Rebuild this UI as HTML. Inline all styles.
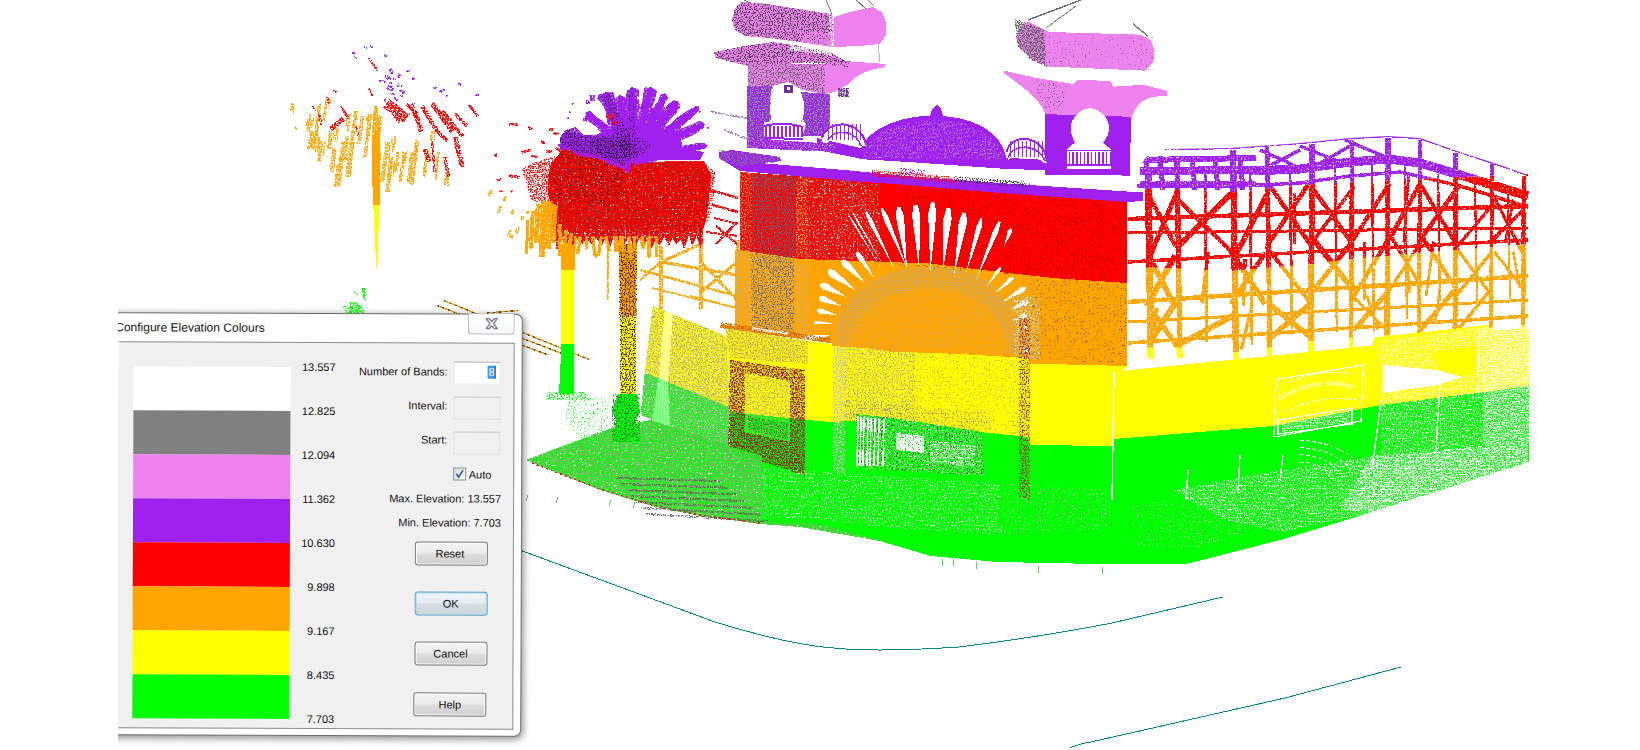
<!DOCTYPE html>
<html><head><meta charset="utf-8"><title>Configure Elevation Colours</title>
<style>
html,body{margin:0;padding:0;background:#fff;overflow:hidden}
body{width:1640px;height:750px;position:relative;font-family:"Liberation Sans",sans-serif;color:#000}
#scene{position:absolute;left:0;top:0}
#clip{position:absolute;left:118px;top:290px;width:440px;height:460px;overflow:hidden}
#dlg{position:absolute;left:-18px;top:22.8px;width:420px;height:421.4px;background:#fff;border:1px solid #6e6e6e;border-radius:7px;
 box-shadow:1px 2px 7px 1px rgba(0,0,0,.42);transform:rotate(0.22deg);transform-origin:220px 210px}
#ttl{position:absolute;left:13.5px;top:5.8px;font-size:12px;line-height:16px;white-space:nowrap;color:#111}
#cls{position:absolute;left:366px;top:-1px;width:45px;height:20px;border:1px solid #a9a9a9;border-top:none;border-radius:0 0 4px 4px;
 background:linear-gradient(#fff,#f4f6f8)}
#cls svg{position:absolute;left:15px;top:3px}
#cli{position:absolute;left:17px;top:28.4px;width:396px;height:386.8px;background:#f0f0f0;border:1px solid #8d8d8d;border-left-color:#f0f0f0;box-sizing:border-box}
.band{position:absolute;left:13.75px;width:157px;height:44px}
.lv{position:absolute;left:160px;width:56px;text-align:right;font-size:11px;line-height:13px;color:#111}
.lb{position:absolute;width:200px;text-align:right;font-size:11px;line-height:13px;color:#111;white-space:nowrap}
.in{position:absolute;left:334.4px;width:45px;height:21px;border:1px solid #e3e9ef;border-top-color:#abadb3;box-sizing:content-box}
.btn{position:absolute;width:71px;height:22px;border:1px solid #7a7a7a;border-radius:3px;font-size:11px;line-height:22px;text-align:center;color:#111;
 background:linear-gradient(#f2f2f2 0%,#ebebeb 48%,#dddddd 52%,#cfcfcf 100%);box-shadow:0 0 0 1px #fff inset}
</style></head>
<body>
<svg id="scene" width="1640" height="750" viewBox="0 0 1640 750" shape-rendering="crispEdges">
<defs>
<filter id="d91" x="0" y="0" width="1640" height="750" filterUnits="userSpaceOnUse" color-interpolation-filters="sRGB"><feTurbulence type="fractalNoise" baseFrequency="0.75" numOctaves="1" seed="3" result="t"/><feColorMatrix in="t" type="matrix" values="0 0 0 0 1 0 0 0 0 1 0 0 0 0 1 10 0 0 0 -3" result="m"/><feComposite in="SourceGraphic" in2="m" operator="in"/></filter>
<filter id="d81" x="0" y="0" width="1640" height="750" filterUnits="userSpaceOnUse" color-interpolation-filters="sRGB"><feTurbulence type="fractalNoise" baseFrequency="0.75" numOctaves="1" seed="4" result="t"/><feColorMatrix in="t" type="matrix" values="0 0 0 0 1 0 0 0 0 1 0 0 0 0 1 10 0 0 0 -3.5" result="m"/><feComposite in="SourceGraphic" in2="m" operator="in"/></filter>
<filter id="d68" x="0" y="0" width="1640" height="750" filterUnits="userSpaceOnUse" color-interpolation-filters="sRGB"><feTurbulence type="fractalNoise" baseFrequency="0.75" numOctaves="1" seed="5" result="t"/><feColorMatrix in="t" type="matrix" values="0 0 0 0 1 0 0 0 0 1 0 0 0 0 1 10 0 0 0 -4" result="m"/><feComposite in="SourceGraphic" in2="m" operator="in"/></filter>
<filter id="d60" x="0" y="0" width="1640" height="750" filterUnits="userSpaceOnUse" color-interpolation-filters="sRGB"><feTurbulence type="fractalNoise" baseFrequency="0.75" numOctaves="1" seed="6" result="t"/><feColorMatrix in="t" type="matrix" values="0 0 0 0 1 0 0 0 0 1 0 0 0 0 1 10 0 0 0 -4.25" result="m"/><feComposite in="SourceGraphic" in2="m" operator="in"/></filter>
<filter id="d50" x="0" y="0" width="1640" height="750" filterUnits="userSpaceOnUse" color-interpolation-filters="sRGB"><feTurbulence type="fractalNoise" baseFrequency="0.75" numOctaves="1" seed="7" result="t"/><feColorMatrix in="t" type="matrix" values="0 0 0 0 1 0 0 0 0 1 0 0 0 0 1 10 0 0 0 -4.5" result="m"/><feComposite in="SourceGraphic" in2="m" operator="in"/></filter>
<filter id="d40" x="0" y="0" width="1640" height="750" filterUnits="userSpaceOnUse" color-interpolation-filters="sRGB"><feTurbulence type="fractalNoise" baseFrequency="0.75" numOctaves="1" seed="8" result="t"/><feColorMatrix in="t" type="matrix" values="0 0 0 0 1 0 0 0 0 1 0 0 0 0 1 10 0 0 0 -4.75" result="m"/><feComposite in="SourceGraphic" in2="m" operator="in"/></filter>
<filter id="d31" x="0" y="0" width="1640" height="750" filterUnits="userSpaceOnUse" color-interpolation-filters="sRGB"><feTurbulence type="fractalNoise" baseFrequency="0.75" numOctaves="1" seed="9" result="t"/><feColorMatrix in="t" type="matrix" values="0 0 0 0 1 0 0 0 0 1 0 0 0 0 1 10 0 0 0 -5" result="m"/><feComposite in="SourceGraphic" in2="m" operator="in"/></filter>
<filter id="d25" x="0" y="0" width="1640" height="750" filterUnits="userSpaceOnUse" color-interpolation-filters="sRGB"><feTurbulence type="fractalNoise" baseFrequency="0.75" numOctaves="1" seed="10" result="t"/><feColorMatrix in="t" type="matrix" values="0 0 0 0 1 0 0 0 0 1 0 0 0 0 1 10 0 0 0 -5.25" result="m"/><feComposite in="SourceGraphic" in2="m" operator="in"/></filter>
<filter id="d19" x="0" y="0" width="1640" height="750" filterUnits="userSpaceOnUse" color-interpolation-filters="sRGB"><feTurbulence type="fractalNoise" baseFrequency="0.75" numOctaves="1" seed="11" result="t"/><feColorMatrix in="t" type="matrix" values="0 0 0 0 1 0 0 0 0 1 0 0 0 0 1 10 0 0 0 -5.5" result="m"/><feComposite in="SourceGraphic" in2="m" operator="in"/></filter>
<filter id="d14" x="0" y="0" width="1640" height="750" filterUnits="userSpaceOnUse" color-interpolation-filters="sRGB"><feTurbulence type="fractalNoise" baseFrequency="0.75" numOctaves="1" seed="12" result="t"/><feColorMatrix in="t" type="matrix" values="0 0 0 0 1 0 0 0 0 1 0 0 0 0 1 10 0 0 0 -5.75" result="m"/><feComposite in="SourceGraphic" in2="m" operator="in"/></filter>
<filter id="d9" x="0" y="0" width="1640" height="750" filterUnits="userSpaceOnUse" color-interpolation-filters="sRGB"><feTurbulence type="fractalNoise" baseFrequency="0.75" numOctaves="1" seed="13" result="t"/><feColorMatrix in="t" type="matrix" values="0 0 0 0 1 0 0 0 0 1 0 0 0 0 1 10 0 0 0 -6" result="m"/><feComposite in="SourceGraphic" in2="m" operator="in"/></filter>
<filter id="d5" x="0" y="0" width="1640" height="750" filterUnits="userSpaceOnUse" color-interpolation-filters="sRGB"><feTurbulence type="fractalNoise" baseFrequency="0.75" numOctaves="1" seed="14" result="t"/><feColorMatrix in="t" type="matrix" values="0 0 0 0 1 0 0 0 0 1 0 0 0 0 1 10 0 0 0 -6.3" result="m"/><feComposite in="SourceGraphic" in2="m" operator="in"/></filter>
<filter id="d3" x="0" y="0" width="1640" height="750" filterUnits="userSpaceOnUse" color-interpolation-filters="sRGB"><feTurbulence type="fractalNoise" baseFrequency="0.75" numOctaves="1" seed="15" result="t"/><feColorMatrix in="t" type="matrix" values="0 0 0 0 1 0 0 0 0 1 0 0 0 0 1 10 0 0 0 -6.5" result="m"/><feComposite in="SourceGraphic" in2="m" operator="in"/></filter>
</defs>
<path d="M517,549 L715,622 Q790,645 834,648 Q875,652.5 959,647 Q1040,637 1112,623 L1223,597" fill="none" stroke="#008b8b" stroke-width="1"/>
<path d="M1070,748 Q1078,744 1091,742 L1285,698 L1401,667" fill="none" stroke="#008b8b" stroke-width="1"/>
<defs>
<clipPath id="cpP"><polygon points="1137,170 1150,152 1165,149 1230,148 1300,143 1350,138 1388,136 1420,138 1460,152 1500,165 1528,175 1529,174 1529,174 1315,184 1238,192 1150,189 1120,191 1120,168"/></clipPath>
<clipPath id="cpR"><polygon points="1120,191 1150,189 1238,192 1315,184 1529,174 1529,244 1352,259 1312,264 1232,271 1150,267.5 1120,271"/></clipPath>
<clipPath id="cpO"><polygon points="1120,271 1150,267.5 1232,271 1312,264 1352,259 1529,244 1529,325 1352,338 1294,342.6 1257,350.6 1219,354 1177,347.5 1120,348"/></clipPath>
<clipPath id="cpY"><polygon points="1120,348 1177,347.5 1219,354 1257,350.6 1294,342.6 1352,338 1529,325 1529,331 1372,350 1120,374"/></clipPath>
<g id="lat" fill="none"><line x1="1148" y1="166.769" x2="1151" y2="358.754" stroke-width="6.88975"/><line x1="1177" y1="160.815" x2="1180" y2="358.5" stroke-width="5.27381"/><line x1="1233" y1="149.786" x2="1236" y2="361.613" stroke-width="6.36913"/><line x1="1267" y1="147.357" x2="1270" y2="358.186" stroke-width="4.84069"/><line x1="1312" y1="143.8" x2="1311" y2="352.172" stroke-width="5.88525"/><line x1="1352" y1="139.895" x2="1351" y2="349" stroke-width="4.43162"/><line x1="1388" y1="138" x2="1387" y2="337.965" stroke-width="5.41975"/><line x1="1420" y1="140" x2="1419" y2="334.456" stroke-width="4.10438"/><line x1="1456" y1="152.6" x2="1455" y2="330.509" stroke-width="5.00325"/><line x1="1492" y1="164.4" x2="1491" y2="331.949" stroke-width="3.75788"/><line x1="1524" y1="175.571" x2="1523" y2="331.128" stroke-width="4.58675"/><line x1="1205" y1="173.385" x2="1207" y2="341.752" stroke-width="2.99"/><line x1="1250" y1="171.571" x2="1252" y2="345.131" stroke-width="2.864"/><line x1="1290" y1="168.714" x2="1292" y2="328.583" stroke-width="2.752"/><line x1="1335" y1="164.5" x2="1337" y2="331.699" stroke-width="2.626"/><line x1="1372" y1="161.842" x2="1374" y2="331.536" stroke-width="2.5224"/><line x1="1405" y1="162.062" x2="1407" y2="319.06" stroke-width="2.43"/><line x1="1438" y1="169.3" x2="1440" y2="301.145" stroke-width="2.3376"/><line x1="1475" y1="181.875" x2="1477" y2="301.953" stroke-width="2.234"/><line x1="1508" y1="192.857" x2="1510" y2="300.587" stroke-width="2.1416"/><polyline fill="none" stroke-width="2.5" points="1165,149 1230,148 1300,143 1350,138 1388,136 1420,138 1460,152 1500,165 1528,175"/><polyline fill="none" stroke-width="9" points="1250,171 1300,169 1350,162 1388,159 1420,163 1460,175 1528,196"/><line x1="1140" y1="160" x2="1256" y2="158" stroke-width="6"/><line x1="1140" y1="171" x2="1256" y2="170" stroke-width="8"/><line x1="1140" y1="184" x2="1256" y2="184" stroke-width="6"/><line x1="1146" y1="156" x2="1149" y2="190" stroke-width="5"/><line x1="1160" y1="156" x2="1163" y2="190" stroke-width="5"/><line x1="1192" y1="156" x2="1195" y2="190" stroke-width="5"/><line x1="1215" y1="156" x2="1218" y2="190" stroke-width="5"/><line x1="1240" y1="156" x2="1243" y2="190" stroke-width="5"/><polyline fill="none" stroke-width="3.5" points="1137,186 1240,186 1300,183 1350,176 1400,172 1460,186 1528,207"/><line x1="1260" y1="150" x2="1300" y2="168" stroke-width="3.5"/><line x1="1300" y1="146" x2="1345" y2="164" stroke-width="3.5"/><line x1="1345" y1="140" x2="1388" y2="158" stroke-width="3.5"/><line x1="1262" y1="170" x2="1300" y2="150" stroke-width="3.5"/><line x1="1312" y1="168" x2="1350" y2="146" stroke-width="3.5"/><line x1="1128" y1="219" x2="1528" y2="206" stroke-width="4.5"/><line x1="1128" y1="233" x2="1528" y2="228" stroke-width="3"/><line x1="1128" y1="262" x2="1528" y2="240" stroke-width="3.5"/><line x1="1128" y1="302" x2="1528" y2="276" stroke-width="4.5"/><line x1="1128" y1="322" x2="1528" y2="300" stroke-width="3"/><line x1="1128" y1="343" x2="1528" y2="316" stroke-width="3.5"/><line x1="1148.18" y1="193.886" x2="1175.43" y2="245.846" stroke-width="4.58828"/><line x1="1149.58" y1="257.241" x2="1178.44" y2="188.187" stroke-width="4.80811"/><line x1="1149.7" y1="258.122" x2="1175.02" y2="306.633" stroke-width="5.64151"/><line x1="1146.45" y1="306.44" x2="1175.03" y2="255.786" stroke-width="6.08782"/><line x1="1149.96" y1="307.626" x2="1178.84" y2="348.677" stroke-width="5.26534"/><line x1="1148.47" y1="343.927" x2="1175.37" y2="303.024" stroke-width="5.966"/><line x1="1157.06" y1="308.274" x2="1151.79" y2="345.17" stroke-width="3.58267"/><line x1="1176.25" y1="197.833" x2="1231.54" y2="251.759" stroke-width="4.44367"/><line x1="1175.93" y1="248.841" x2="1234.19" y2="190.065" stroke-width="5.24213"/><line x1="1208.18" y1="251.957" x2="1201.88" y2="303.336" stroke-width="3.49031"/><line x1="1174.81" y1="346.868" x2="1234.9" y2="314.812" stroke-width="5.63782"/><line x1="1235.24" y1="256.109" x2="1266.57" y2="194.695" stroke-width="5.10621"/><line x1="1231.52" y1="252.135" x2="1265.25" y2="304.001" stroke-width="5.83288"/><line x1="1230.65" y1="303.893" x2="1265.41" y2="252.804" stroke-width="4.55736"/><line x1="1245.17" y1="258.587" x2="1243.34" y2="305.85" stroke-width="3.31194"/><line x1="1252.12" y1="305.151" x2="1241.1" y2="349.635" stroke-width="3.31194"/><line x1="1269.39" y1="184.842" x2="1312.14" y2="247.199" stroke-width="4.50431"/><line x1="1266.89" y1="246.301" x2="1311.57" y2="179.444" stroke-width="4.52882"/><line x1="1294.17" y1="193.347" x2="1294.14" y2="243.779" stroke-width="3.20366"/><line x1="1265.76" y1="245.896" x2="1310.71" y2="303.334" stroke-width="3.95315"/><line x1="1269.35" y1="304.257" x2="1313.92" y2="340.02" stroke-width="5.29009"/><line x1="1266.97" y1="340.553" x2="1310.61" y2="303.384" stroke-width="5.51437"/><line x1="1312.75" y1="188.596" x2="1352.68" y2="244.167" stroke-width="4.53633"/><line x1="1312.89" y1="241.133" x2="1354.03" y2="186.733" stroke-width="3.64385"/><line x1="1312.81" y1="238.448" x2="1353.92" y2="291.111" stroke-width="5.40297"/><line x1="1309.89" y1="294.905" x2="1352.65" y2="241.22" stroke-width="4.96614"/><line x1="1350.16" y1="244.108" x2="1389.36" y2="183.733" stroke-width="4.39007"/><line x1="1351.19" y1="300.28" x2="1389.31" y2="237.763" stroke-width="4.34444"/><line x1="1364.41" y1="241.523" x2="1364.14" y2="299.956" stroke-width="2.93293"/><line x1="1350.27" y1="293.93" x2="1389.28" y2="332.632" stroke-width="3.37181"/><line x1="1353.57" y1="330.022" x2="1388.21" y2="291.659" stroke-width="4.8365"/><line x1="1366.8" y1="295.419" x2="1378" y2="330.141" stroke-width="2.93293"/><line x1="1389.85" y1="238.255" x2="1419.68" y2="184.535" stroke-width="4.62786"/><line x1="1408.58" y1="175.549" x2="1403.83" y2="242.142" stroke-width="2.81827"/><line x1="1389.43" y1="234.114" x2="1421.8" y2="287.721" stroke-width="3.49139"/><line x1="1387.23" y1="293.587" x2="1421.94" y2="240.369" stroke-width="3.23096"/><line x1="1404.54" y1="237.943" x2="1409.71" y2="292.896" stroke-width="2.81827"/><line x1="1421.28" y1="186.071" x2="1456.61" y2="244.637" stroke-width="4.16879"/><line x1="1421.98" y1="237.447" x2="1457.97" y2="187.155" stroke-width="4.6193"/><line x1="1419.72" y1="233.531" x2="1457.3" y2="290.355" stroke-width="4.26055"/><line x1="1433.73" y1="241.551" x2="1425.99" y2="296.427" stroke-width="2.71635"/><line x1="1419.28" y1="331.456" x2="1454.05" y2="290.84" stroke-width="4.7392"/><line x1="1439.85" y1="289.525" x2="1435.06" y2="324.284" stroke-width="2.71635"/><line x1="1457.58" y1="246.129" x2="1493.47" y2="203.55" stroke-width="3.2384"/><line x1="1456.35" y1="247.771" x2="1493.25" y2="297.876" stroke-width="3.16875"/><line x1="1456.84" y1="294.952" x2="1492.57" y2="250.78" stroke-width="3.47991"/><line x1="1457.9" y1="329.805" x2="1491.09" y2="289.018" stroke-width="3.51963"/><line x1="1493.92" y1="196.912" x2="1523.52" y2="254.755" stroke-width="3.29601"/><line x1="1489.66" y1="243.012" x2="1524.19" y2="208.626" stroke-width="3.8252"/><line x1="1513.41" y1="199.589" x2="1505.16" y2="241.618" stroke-width="2.48703"/><line x1="1494.34" y1="251.845" x2="1524.5" y2="290.355" stroke-width="2.98835"/><line x1="1513.14" y1="251.516" x2="1519.81" y2="288.039" stroke-width="2.48703"/></g>
</defs>
<g clip-path="url(#cpP)" stroke="#a020f0" color="#a020f0"><use href="#lat"/></g>
<g clip-path="url(#cpR)" stroke="#ff0000" color="#ff0000"><use href="#lat"/></g>
<g clip-path="url(#cpO)" stroke="#ffa500" color="#ffa500"><use href="#lat"/></g>
<g clip-path="url(#cpY)" stroke="#ffff00" color="#ffff00"><use href="#lat"/></g>
<polygon points="1127,150 1529,130 1529,330 1127,372" fill="#ffffff" filter="url(#d9)"/>
<polygon points="740,172 900,184 1127,202 1127,283 1053,278 1000,272 930,263.5 860,261 800,259 740,250" fill="#ff0000" />
<polygon points="735,250 740,250 800,259 860,261 930,263.5 1000,272 1053,278 1127,283 1127,366 1030,363.6 1028,357 1020,356 891,351.6 830,343 720,328 722,324 735,326" fill="#ffa500" />
<polygon points="808,341 891,351.6 1020,356 1028,357 1030,363.6 1127,366 1122,371 1127,370.3 1372,345.6 1374,337.5 1488,325 1490,330 1529,329 1529,386 1481,392.4 1381,405 1273,426 1114,439 1112,446 1030,445 1028,437 990,433 859,421.6 804,420" fill="#ffff00" />
<polygon points="804,420 859,421.6 990,433 1028,437 1030,445 1112,446 1114,439 1273,426 1381,405 1481,392.4 1529,386 1529,462 1359,516 1280,540 1188,563.6 1100,564 997,562 931,556 880,541 813,524 760,524 760,440" fill="#00ff00" />
<polygon points="740,172 752,173 752,252 740,250" fill="#b0a070" filter="url(#d25)"/>
<polygon points="752,173 796,177 796,257 752,252" fill="#5a6a88" filter="url(#d31)"/>
<polygon points="796,177 808,178 808,259 796,257" fill="#c8b060" filter="url(#d31)"/>
<polygon points="808,178 880,184 880,262 808,259" fill="#ffffff" filter="url(#d9)"/>
<polygon points="808,178 880,184 880,262 808,259" fill="#807070" filter="url(#d14)"/>
<polygon points="752,173 880,184 880,200 752,188" fill="#806060" filter="url(#d14)"/>
<polygon points="900,184 1127,202 1127,283 900,266" fill="#7a1010" filter="url(#d5)"/>
<polygon points="1030,276 1127,283 1127,365 1030,358" fill="#704010" filter="url(#d5)"/>
<path d="M832,344 C834,300 870,278 930,276 C990,278 1022,305 1026,356 L1026,358 L832,346 Z" fill="#ffa500" />
<path d="M834,344 C836,296 872,268 930,266 C990,268 1022,300 1024,356 L1008,354 C1004,312 978,290 930,288 C884,290 852,310 850,345 Z" fill="#b8a890" filter="url(#d31)"/>
<path d="M850,345 C852,310 884,290 930,288 C978,290 1004,312 1008,354 Z" fill="#c8a878" filter="url(#d14)"/>
<polygon points="804.723,339.963 809.124,341.175 830.612,335.125 808.291,334.789 804.348,337.089" fill="#ffffff" />
<polygon points="813.578,323.481 816.809,324.601 834.014,323.333 816.932,320.923 813.633,321.826" fill="#ffffff" />
<polygon points="816.712,311.388 819.617,313.661 837.415,315.17 820.927,308.299 817.302,308.975" fill="#ffffff" />
<polygon points="818.772,299.069 821.785,302.072 841.95,306.1 824.02,296.032 819.777,296.351" fill="#ffffff" />
<polygon points="819.673,285.588 822.946,289.47 846.485,297.029 826.215,282.875 821.144,282.621" fill="#ffffff" />
<polygon points="827.251,272.007 830.268,277.007 855.556,290.227 835.128,270.304 829.438,268.991" fill="#ffffff" />
<polygon points="840.796,261.483 843.195,266.635 865.76,283.424 848.324,261.356 843.104,259.107" fill="#ffffff" />
<polygon points="855.664,253.059 857.314,258.161 874.83,278.889 861.87,255.045 857.715,251.657" fill="#ffffff" />
<polygon points="847.719,214.025 852.656,223.104 881.633,268.912 854.228,222.147 848.426,213.594" fill="#ffffff" />
<polygon points="852.25,212.884 856.892,221.847 884.354,267.098 858.482,220.92 852.965,212.467" fill="#ffffff" />
<polygon points="864.834,212.005 868.419,222.004 895.238,270.499 872.533,219.946 866.685,211.079" fill="#ffffff" />
<polygon points="880.49,208.627 883.266,219.018 907.71,269.365 888.344,216.855 882.775,207.654" fill="#ffffff" />
<polygon points="896.793,207.255 895.879,217.536 907.029,269.365 904.085,216.432 900.486,206.758" fill="#ffffff" />
<polygon points="913.786,204.837 912.056,215.297 919.048,269.365 920.325,214.862 917.507,204.641" fill="#ffffff" />
<polygon points="930.791,202.411 928.152,213.402 930.385,271.633 936.428,213.673 934.515,202.533" fill="#ffffff" />
<polygon points="946.671,207.972 943.496,217.743 942.857,270.499 951.742,218.493 950.381,208.309" fill="#ffffff" />
<polygon points="962.561,212.369 958.683,221.791 954.195,273.9 966.85,223.152 966.237,212.982" fill="#ffffff" />
<polygon points="980.21,218.01 976.208,226.671 965.533,275.034 981.524,228.159 982.602,218.68" fill="#ffffff" />
<polygon points="998.395,221.281 993.178,230.146 975.737,280.703 998.296,232.213 1000.7,222.211" fill="#ffffff" />
<polygon points="1009.92,228.185 1007.64,230.644 1004.08,246.689 1011.95,232.259 1011.85,228.912" fill="#ffffff" />
<polygon points="1000.01,266.613 996.83,269.286 985.941,287.506 999.814,271.44 1001.35,267.582" fill="#ffffff" />
<polygon points="1012.47,276.526 1008.55,278.298 993.878,294.308 1011.59,281.747 1013.84,278.078" fill="#ffffff" />
<polygon points="1024.97,286.45 1020.36,287.517 1001.81,302.245 1023.27,292.211 1026.28,288.562" fill="#ffffff" />
<polygon points="1027.24,299.815 1023.55,299.682 1009.75,310.181 1026.43,305.442 1028.54,302.407" fill="#ffffff" />
<polygon points="1026.24,313.586 1023.62,313.111 1014.29,320.385 1025.9,318.136 1027.27,315.847" fill="#ffffff" />
<polygon points="1026.33,325.344 1024.9,325.021 1021.09,329.456 1026.8,328.176 1027.18,326.764" fill="#ffffff" />
<polygon points="1029.42,349.604 1028.64,347.539 1021.09,348.73 1026.87,353.731 1028.63,352.391" fill="#ffffff" />
<polygon points="1012,290 1040,300 1040,360 1015,358" fill="#9a9a9a" filter="url(#d19)"/>
<polygon points="1012,290 1040,300 1040,360 1015,358" fill="#ffffff" filter="url(#d14)"/>
<polygon points="719,152 732,150 780,157 781,161 760,163 850,170.5 900,175.5 1000,183 1127,191.5 1143,192.5 1143,201 1127,202 1000,193 900,184.5 850,181 740,171 732,166 719,158" fill="#a020f0" />
<polygon points="719,150 780,156 781,162 740,166 719,158" fill="#808080" filter="url(#d31)"/>
<polygon points="817,138 860,148 1010,158 1047,160 1130,170 1130,176 1047,170.5 1000,168.5 860,158.5 817,150" fill="#a020f0" />
<polygon points="872,170 955,177 955,183 872,176" fill="#ff0000" filter="url(#d40)"/>
<polygon points="955,176 1030,182 1030,188 955,182" fill="#403040" filter="url(#d31)"/>
<polygon points="900,168 925,170 925,176 900,174" fill="#a020f0" filter="url(#d31)"/>
<path d="M859,159 C858,135 890,117 930,115.5 L932,109 L937,105 L941,109 L943,116 C985,119 1008,140 1007,168 Z" fill="#a020f0" />
<path d="M862,158 C862,138 892,121 932,119 C980,121 1003,142 1004,160 Z" fill="#c9a0dc" filter="url(#d14)"/>
<polygon points="732,20 735,8 741,2 760,3 830,14 834,17 850,12 873,7 882,12 886,22 886,35 880,44 860,46 834,47 800,42 770,38 745,36 735,30" fill="#ee82ee" />
<clipPath id="cpDL"><polygon points="732,20 735,8 741,2 760,3 830,14 834,17 850,12 873,7 882,12 886,22 886,35 880,44 860,46 834,47 800,42 770,38 745,36 735,30"/></clipPath>
<g clip-path="url(#cpDL)">
<polygon points="730,0 834,0 832,50 730,40" fill="#4a404a" filter="url(#d31)"/>
<polygon points="800,30 836,34 834,50 800,44" fill="#ee82ee" filter="url(#d60)"/>
<polygon points="828,0 834,0 834,48 830,48" fill="#ffffff" filter="url(#d50)"/>
</g>
<line x1="744" y1="0" x2="750" y2="3" stroke="#707070" stroke-width="1" />
<line x1="826" y1="0" x2="832" y2="14" stroke="#808080" stroke-width="1" />
<line x1="856" y1="0" x2="866" y2="9" stroke="#707070" stroke-width="1" />
<line x1="868" y1="0" x2="874" y2="6" stroke="#808080" stroke-width="1" />
<line x1="832" y1="14" x2="830" y2="46" stroke="#c0a0c0" stroke-width="1" />
<line x1="878" y1="44" x2="880" y2="62" stroke="#e0a0e0" stroke-width="1" />
<polygon points="714,52 745,46 772,42 800,46 830,52 849,63 849,66 810,62 760,66 748,66 716,58" fill="#ee82ee" />
<polygon points="714,52 745,46 772,42 800,46 830,52 849,63 849,66 810,62 760,66 748,66 716,58" fill="#4a404a" filter="url(#d31)"/>
<polygon points="790,44 832,50 832,56 790,50" fill="#ffffff" filter="url(#d60)"/>
<path d="M803,58 L886,64 L885,67 C868,70 856,74 849,84 L834,92 L825,94 L825,62 Z" fill="#ee82ee" />
<polygon points="803,57 850,61 848,67 806,63" fill="#4a404a" filter="url(#d31)"/>
<polygon points="748,64 825,64 825,94 803,90 788,82 772,86 748,86" fill="#ee82ee" />
<polygon points="748,64 825,64 825,94 803,90 788,82 772,86 748,86" fill="#6a606a" filter="url(#d31)"/>
<polygon points="747,86 772,86 770,100 773,116 768,124 772,144 747,144" fill="#a020f0" />
<polygon points="801,92 830,94 830,136 803,136 806,124 801,116 803,100" fill="#a020f0" />
<polygon points="747,86 773,86 773,144 747,144" fill="#8a9a8a" filter="url(#d31)"/>
<polygon points="801,92 830,94 830,136 801,136" fill="#8a9a8a" filter="url(#d31)"/>
<path d="M771,118 C767,100 776,88 788,83 C799,88 808,100 803,118 L800,123 L803,128 L771,128 L774,123 Z" fill="#ffffff" />
<rect x="784" y="85" width="9" height="8" fill="#6a30a0"/><rect x="787" y="87" width="3" height="3" fill="#fff"/>
<rect x="838" y="88" width="11" height="9" fill="#6a30a0" filter="url(#d68)"/>
<rect x="764" y="122" width="39" height="17" fill="#fff"/>
<line x1="766" y1="126" x2="766" y2="137" stroke="#a020f0" stroke-width="1.5" />
<line x1="770" y1="126" x2="770" y2="137" stroke="#a020f0" stroke-width="1.5" />
<line x1="774" y1="126" x2="774" y2="137" stroke="#a020f0" stroke-width="1.5" />
<line x1="778" y1="126" x2="778" y2="137" stroke="#a020f0" stroke-width="1.5" />
<line x1="782" y1="126" x2="782" y2="137" stroke="#a020f0" stroke-width="1.5" />
<line x1="786" y1="126" x2="786" y2="137" stroke="#a020f0" stroke-width="1.5" />
<line x1="790" y1="126" x2="790" y2="137" stroke="#a020f0" stroke-width="1.5" />
<line x1="794" y1="126" x2="794" y2="137" stroke="#a020f0" stroke-width="1.5" />
<line x1="798" y1="126" x2="798" y2="137" stroke="#a020f0" stroke-width="1.5" />
<line x1="802" y1="126" x2="802" y2="137" stroke="#a020f0" stroke-width="1.5" />
<path d="M764,126 Q783,121 803,127" fill="none" stroke="#a020f0" stroke-width="2"/>
<line x1="764" y1="138" x2="803" y2="139" stroke="#a020f0" stroke-width="2" />
<path d="M821,142 C826,118 860,118 866,146 L860,146 C856,134 834,132 827,144 Z" fill="#ffffff" />
<path d="M822,138 C827,119 860,119 866,144" fill="none" stroke="#a020f0" stroke-width="2"/>
<path d="M828,140 C834,128 856,130 861,146" fill="none" stroke="#a020f0" stroke-width="1.5"/>
<line x1="828" y1="124" x2="828" y2="140" stroke="#a020f0" stroke-width="1" />
<line x1="832" y1="124" x2="832" y2="140" stroke="#a020f0" stroke-width="1" />
<line x1="836" y1="124" x2="836" y2="140" stroke="#a020f0" stroke-width="1" />
<line x1="840" y1="124" x2="840" y2="140" stroke="#a020f0" stroke-width="1" />
<line x1="844" y1="124" x2="844" y2="140" stroke="#a020f0" stroke-width="1" />
<line x1="848" y1="124" x2="848" y2="140" stroke="#a020f0" stroke-width="1" />
<line x1="852" y1="124" x2="852" y2="140" stroke="#a020f0" stroke-width="1" />
<line x1="856" y1="124" x2="856" y2="140" stroke="#a020f0" stroke-width="1" />
<line x1="860" y1="124" x2="860" y2="140" stroke="#a020f0" stroke-width="1" />
<polygon points="747,138 835,144 835,152 747,148" fill="#a020f0" />
<polygon points="747,138 835,144 835,152 747,148" fill="#b0a0b0" filter="url(#d25)"/>
<line x1="712" y1="112" x2="747" y2="118" stroke="#a080b0" stroke-width="2" filter="url(#d60)"/>
<line x1="724" y1="130" x2="748" y2="139" stroke="#a080b0" stroke-width="2.5" filter="url(#d60)"/>
<polygon points="1028,21.3333 1049.33,32 1140,34.6667 1150.67,40 1154.67,50.6667 1153.33,62.6667 1145.33,70.6667 1049.33,66.6667 1033.33,60 1020,48 1016,37.3333 1020,26.6667" fill="#ee82ee" />
<polygon points="1014.67,18.6667 1044,29.3333 1046.67,66.6667 1030.67,60 1017.33,45.3333" fill="#606060" filter="url(#d50)"/>
<polygon points="1044,32 1153.33,34.6667 1153.33,70.6667 1046.67,66.6667" fill="#806080" filter="url(#d3)"/>
<line x1="1081" y1="0" x2="1028" y2="20" stroke="#707070" stroke-width="1.5" />
<line x1="1076" y1="6" x2="1046" y2="28" stroke="#808080" stroke-width="1" />
<line x1="1133" y1="24" x2="1148" y2="36" stroke="#808080" stroke-width="1.5" />
<path d="M1004,70.6667 L1033.33,77.3333 L1073.33,84 L1078.67,79.4667 L1110.67,81.3333 L1113.33,86.6667 L1142.67,84.8 L1166.67,90.6667 L1166.67,96 C1145.33,96 1137.33,101.333 1132,117.333 L1132,117.333 L1045.33,114.667 C1044,106.667 1033.33,93.3333 1004,73.3333 Z" fill="#ee82ee" />
<polygon points="1033.33,80 1068,85.3333 1060,112 1045.33,112" fill="#706070" filter="url(#d9)"/>
<polygon points="1045.33,114.133 1131.47,116.8 1129.33,174.667 1045.33,174.667" fill="#a020f0" />
<path d="M1072,136 C1066.67,120 1078.67,109.333 1089.87,108 C1101.33,109.333 1113.33,120 1107.47,136 L1103.2,142.667 L1110.67,149.333 L1110.67,168.533 L1066.67,168.533 L1066.67,149.333 L1074.67,142.667 Z" fill="#ffffff" />
<line x1="1069.33" y1="152" x2="1069.33" y2="165" stroke="#a020f0" stroke-width="1.5" />
<line x1="1073.07" y1="152" x2="1073.07" y2="165" stroke="#a020f0" stroke-width="1.5" />
<line x1="1076.8" y1="152" x2="1076.8" y2="165" stroke="#a020f0" stroke-width="1.5" />
<line x1="1080.53" y1="152" x2="1080.53" y2="165" stroke="#a020f0" stroke-width="1.5" />
<line x1="1084.27" y1="152" x2="1084.27" y2="165" stroke="#a020f0" stroke-width="1.5" />
<line x1="1088" y1="152" x2="1088" y2="165" stroke="#a020f0" stroke-width="1.5" />
<line x1="1091.73" y1="152" x2="1091.73" y2="165" stroke="#a020f0" stroke-width="1.5" />
<line x1="1095.47" y1="152" x2="1095.47" y2="165" stroke="#a020f0" stroke-width="1.5" />
<line x1="1099.2" y1="152" x2="1099.2" y2="165" stroke="#a020f0" stroke-width="1.5" />
<line x1="1102.93" y1="152" x2="1102.93" y2="165" stroke="#a020f0" stroke-width="1.5" />
<line x1="1106.67" y1="152" x2="1106.67" y2="165" stroke="#a020f0" stroke-width="1.5" />
<line x1="1110.4" y1="152" x2="1110.4" y2="165" stroke="#a020f0" stroke-width="1.5" />
<line x1="1066.67" y1="150.667" x2="1110.67" y2="150.667" stroke="#a020f0" stroke-width="1.5" />
<line x1="1066.67" y1="164.8" x2="1110.67" y2="164.8" stroke="#a020f0" stroke-width="2.5" />
<path d="M1008,160 C1009.33,133.333 1042.67,133.333 1046.67,162.667 L1042.67,162.667 C1037.33,150.667 1017.33,152 1008,160 Z" fill="#ffffff" />
<path d="M1006.67,152 C1010.67,133.333 1040,134.667 1046.13,156" fill="none" stroke="#a020f0" stroke-width="2"/>
<path d="M1008,157.333 C1014.67,142.667 1037.33,144 1045.33,161.333" fill="none" stroke="#a020f0" stroke-width="1.5"/>
<line x1="1010.67" y1="141.333" x2="1010.67" y2="157.333" stroke="#a020f0" stroke-width="1" />
<line x1="1014.67" y1="141.333" x2="1014.67" y2="157.333" stroke="#a020f0" stroke-width="1" />
<line x1="1018.67" y1="141.333" x2="1018.67" y2="157.333" stroke="#a020f0" stroke-width="1" />
<line x1="1022.67" y1="141.333" x2="1022.67" y2="157.333" stroke="#a020f0" stroke-width="1" />
<line x1="1026.67" y1="141.333" x2="1026.67" y2="157.333" stroke="#a020f0" stroke-width="1" />
<line x1="1030.67" y1="141.333" x2="1030.67" y2="157.333" stroke="#a020f0" stroke-width="1" />
<line x1="1034.67" y1="141.333" x2="1034.67" y2="157.333" stroke="#a020f0" stroke-width="1" />
<line x1="1038.67" y1="141.333" x2="1038.67" y2="157.333" stroke="#a020f0" stroke-width="1" />
<line x1="1042.67" y1="141.333" x2="1042.67" y2="157.333" stroke="#a020f0" stroke-width="1" />
<g filter="url(#d81)">
<line x1="661" y1="246" x2="661" y2="320" stroke="#ffa500" stroke-width="3.5" />
<line x1="701" y1="240" x2="701" y2="310" stroke="#ffa500" stroke-width="3.5" />
<line x1="737" y1="240" x2="737" y2="330" stroke="#ffa500" stroke-width="3" />
<line x1="608" y1="246" x2="608" y2="300" stroke="#ffa500" stroke-width="2.5" />
<line x1="661" y1="262" x2="737" y2="275" stroke="#ffa500" stroke-width="3" />
<line x1="640" y1="270" x2="737" y2="296" stroke="#ffa500" stroke-width="2.5" />
<line x1="661" y1="262" x2="701" y2="244" stroke="#ffa500" stroke-width="3" />
<line x1="701" y1="292" x2="737" y2="262" stroke="#ffa500" stroke-width="3" />
<line x1="701" y1="262" x2="737" y2="300" stroke="#ffa500" stroke-width="3" />
<line x1="640" y1="280" x2="661" y2="262" stroke="#ffa500" stroke-width="2.5" />
<line x1="690" y1="296" x2="737" y2="308" stroke="#ffa500" stroke-width="2" />
<line x1="652" y1="288" x2="700" y2="300" stroke="#ffa500" stroke-width="2" />
<line x1="710" y1="190" x2="738" y2="198" stroke="#ff0000" stroke-width="2.5" />
<line x1="712" y1="205" x2="738" y2="212" stroke="#ff0000" stroke-width="2.5" />
<line x1="714" y1="218" x2="738" y2="224" stroke="#ff0000" stroke-width="2" />
<line x1="706" y1="232" x2="738" y2="236" stroke="#ff0000" stroke-width="2" />
<line x1="716" y1="226" x2="737" y2="244" stroke="#ff0000" stroke-width="2.5" />
<line x1="701" y1="200" x2="701" y2="244" stroke="#ff0000" stroke-width="3" />
<line x1="716" y1="244" x2="737" y2="222" stroke="#ff0000" stroke-width="2.5" />
</g>
<polygon points="751,252.5 794,256 794,333 751,327" fill="#5a6890" filter="url(#d31)"/>
<polygon points="751,252.5 794,256 794,333 751,327" fill="#d8c8a0" filter="url(#d9)"/>
<polygon points="735,250 752,252 752,326 735,324" fill="#d0b080" filter="url(#d25)"/>
<polygon points="796,262 810,264 810,336 796,334" fill="#d0b080" filter="url(#d25)"/>
<polygon points="722,322 830,338 830,343 720,328" fill="#d06010" filter="url(#d50)"/>
<polygon points="752,327 788,332 788,335 752,330" fill="#ffffff" filter="url(#d68)"/>
<polygon points="652.7,306 731,338 729,407 644.7,372.7" fill="#b8a888" filter="url(#d91)"/>
<polygon points="652.7,306 731,338 729,407 644.7,372.7" fill="#ffff00" filter="url(#d60)"/>
<polygon points="644.7,372.7 729,407 729,452 690,436 640.7,415" fill="#a8b098" filter="url(#d91)"/>
<polygon points="644.7,372.7 729,407 729,452 690,436 640.7,415" fill="#00ff00" filter="url(#d50)"/>
<polygon points="664.7,311 673,314 668,382 658.5,378" fill="#ffff70" />
<polygon points="658.5,378 668,382 670,428 651,423" fill="#70ff70" />
<line x1="666" y1="312" x2="660" y2="379" stroke="#ffffc8" stroke-width="0.6" />
<line x1="660" y1="379" x2="654" y2="424" stroke="#d0ffd0" stroke-width="0.6" />
<line x1="667.6" y1="312.5" x2="661.9" y2="379.8" stroke="#ffffc8" stroke-width="0.6" />
<line x1="661.9" y1="379.8" x2="657.4" y2="425" stroke="#d0ffd0" stroke-width="0.6" />
<line x1="669.2" y1="313" x2="663.8" y2="380.6" stroke="#ffffc8" stroke-width="0.6" />
<line x1="663.8" y1="380.6" x2="660.8" y2="426" stroke="#d0ffd0" stroke-width="0.6" />
<line x1="670.8" y1="313.5" x2="665.7" y2="381.4" stroke="#ffffc8" stroke-width="0.6" />
<line x1="665.7" y1="381.4" x2="664.2" y2="427" stroke="#d0ffd0" stroke-width="0.6" />
<line x1="672.4" y1="314" x2="667.6" y2="382.2" stroke="#ffffc8" stroke-width="0.6" />
<line x1="667.6" y1="382.2" x2="667.6" y2="428" stroke="#d0ffd0" stroke-width="0.6" />
<polygon points="726,328 808,341 808,420 730,412" fill="#ffff00" />
<polygon points="730,412 808,420 808,478 730,452" fill="#00ff00" />
<polygon points="726,328 808,341 808,364 730,358" fill="#c0a868" filter="url(#d40)"/>
<path d="M730,360 L805,370 L805,476 L728,450 Z M745,373 L790,381 L790,442 L745,432 Z" fill="#a01818" fill-rule="evenodd" filter="url(#d50)"/>
<polygon points="745,373 790,381 790,442 745,432" fill="#c0b070" filter="url(#d31)"/>
<polygon points="748,416 788,423 788,440 748,430" fill="#309030" filter="url(#d40)"/>
<polygon points="808,344 840,347 840,423 808,420" fill="#ffff00" />
<polygon points="845,346 915,351 915,428 845,421" fill="#b0a888" filter="url(#d25)"/>
<polygon points="915,351 1020,357 1020,436 915,428" fill="#c0a860" filter="url(#d9)"/>
<polygon points="845,400 990,412 990,434 845,421" fill="#a09070" filter="url(#d14)"/>
<polygon points="833,345 845,346 845,474 833,472" fill="#c8c0b8" filter="url(#d40)"/>
<polygon points="856,414 900,419 982,432 984,476 856,468" fill="#00ff00" />
<polygon points="856,414 900,419 982,432 984,476 856,468" fill="#ffffff" filter="url(#d19)"/>
<polygon points="856,414 900,419 982,432 984,476 856,468" fill="#5a4a3a" filter="url(#d14)"/>
<line x1="858" y1="416.24" x2="857" y2="466" stroke="#ffffff" stroke-width="1.6" />
<line x1="861" y1="416.6" x2="860" y2="466" stroke="#ffffff" stroke-width="1.6" />
<line x1="864" y1="416.96" x2="863" y2="466" stroke="#ffffff" stroke-width="1.6" />
<line x1="868" y1="417.44" x2="867" y2="466" stroke="#ffffff" stroke-width="1.6" />
<line x1="871" y1="417.8" x2="870" y2="466" stroke="#ffffff" stroke-width="1.6" />
<line x1="875" y1="418.28" x2="874" y2="466" stroke="#ffffff" stroke-width="1.6" />
<line x1="879" y1="418.76" x2="878" y2="466" stroke="#ffffff" stroke-width="1.6" />
<line x1="884" y1="419.36" x2="883" y2="466" stroke="#ffffff" stroke-width="1.6" />
<polygon points="896,433 924,436 924,453 896,450" fill="#ffffff" filter="url(#d81)"/>
<polygon points="930,440 975,446 975,468 930,462" fill="#ffffff" filter="url(#d31)"/>
<polygon points="1019,318 1030,319 1030,500 1019,498" fill="#a02810" filter="url(#d31)"/>
<polygon points="526,460 560,447 612,428 650,420 700,436 728,446 762,456 762,521 820,524 880,541 800,527 760,524 700,516 652,506 600,490 560,474" fill="#a89a90" filter="url(#d91)"/>
<polygon points="526,460 560,447 612,428 650,420 700,436 728,446 762,456 762,521 820,524 880,541 800,527 760,524 700,516 652,506 600,490 560,474" fill="#00ff00" filter="url(#d60)"/>
<line x1="616" y1="478" x2="720" y2="481" stroke="#6a6460" stroke-width="2.2" filter="url(#d50)"/>
<line x1="621" y1="484" x2="728" y2="487.7" stroke="#6a6460" stroke-width="2.2" filter="url(#d50)"/>
<line x1="626" y1="490" x2="736" y2="494.4" stroke="#6a6460" stroke-width="2.2" filter="url(#d50)"/>
<line x1="631" y1="496" x2="744" y2="501.1" stroke="#6a6460" stroke-width="2.2" filter="url(#d50)"/>
<line x1="636" y1="502" x2="752" y2="507.8" stroke="#6a6460" stroke-width="2.2" filter="url(#d50)"/>
<line x1="641" y1="508" x2="760" y2="514.5" stroke="#6a6460" stroke-width="2.2" filter="url(#d50)"/>
<line x1="646" y1="514" x2="768" y2="521.2" stroke="#6a6460" stroke-width="2.2" filter="url(#d50)"/>
<polygon points="566,398 608,398 608,436 580,440 566,420" fill="#00ff00" filter="url(#d9)"/>
<polygon points="762,468 1000,483 1000,535 880,527 813,519 762,518" fill="#ffffff" filter="url(#d14)"/>
<polygon points="1000,483 1110,490 1110,528 1000,535" fill="#ffffff" filter="url(#d5)"/>
<polyline points="532,463 600,489 652,505 700,515 760,523" fill="none" stroke="#e02020" stroke-width="1.5" stroke-dasharray="2 3"/>
<line x1="526" y1="501" x2="528" y2="495" stroke="#60c060" stroke-width="1" />
<line x1="556" y1="503" x2="558" y2="497" stroke="#60c060" stroke-width="1" />
<line x1="609" y1="506" x2="611" y2="500" stroke="#60c060" stroke-width="1" />
<line x1="633" y1="508" x2="635" y2="502" stroke="#60c060" stroke-width="1" />
<line x1="942" y1="559" x2="942" y2="566" stroke="#40e040" stroke-width="1" />
<line x1="953" y1="559" x2="953" y2="566" stroke="#40e040" stroke-width="1" />
<line x1="976" y1="562" x2="976" y2="569" stroke="#40e040" stroke-width="1" />
<line x1="1038" y1="566" x2="1038" y2="573" stroke="#40e040" stroke-width="1" />
<line x1="1102" y1="567" x2="1102" y2="574" stroke="#40e040" stroke-width="1" />
<polygon points="1381,341 1483,327 1483,392 1381,404" fill="#ffffff" filter="url(#d25)"/>
<polygon points="1483,327 1529,327 1529,386 1483,392" fill="#ffffff" filter="url(#d50)"/>
<polygon points="1381,404 1483,392 1483,445 1381,455" fill="#ffffff" filter="url(#d25)"/>
<polygon points="1483,392 1529,386 1529,442 1483,446" fill="#ffffff" filter="url(#d50)"/>
<polygon points="1430,352 1476,346 1476,372 1462,377 1437,370" fill="#ffff00" />
<polygon points="1172,490 1280,470 1374,456 1528,442 1528,462 1424,502 1359,516 1280,532 1226,520" fill="#ffffff" filter="url(#d25)"/>
<polygon points="1370,456 1528,442 1528,462 1442,494 1374,512 1340,510" fill="#ffffff" filter="url(#d40)"/>
<polygon points="1130,505 1230,490 1250,530 1197,548 1130,545" fill="#ffffff" filter="url(#d5)"/>
<polygon points="1383,365 1437,370 1463,377 1438,385 1383,393" fill="#ffffff" />
<polygon points="1435,360 1470,364 1470,374 1440,370" fill="#ffff00" />
<polygon points="1276.5,379.4 1363.4,364.8 1361,421 1273.8,437" fill="none" stroke="#fff" stroke-width="1.2"/>
<polygon points="1278,420 1352,408 1352,424 1278,434" fill="none" stroke="#fff" stroke-width="1.2"/>
<polygon points="1282,422 1350,410 1350,422 1282,432" fill="#ffffff" filter="url(#d40)"/>
<path id="signarc" d="M1280,401 Q1318,377 1360,391" fill="none"/><text font-family="Liberation Sans, sans-serif" font-size="8" font-style="italic" fill="#fff" style="text-rendering:geometricPrecision"><textPath href="#signarc">Great Scenic Railway</textPath></text>
<path d="M1290,382 Q1322,368 1352,374" fill="none" stroke="#fff" stroke-width="1" stroke-dasharray="4 2"/>
<path d="M1284,412 Q1320,394 1356,400" fill="none" stroke="#fff" stroke-width="1" stroke-dasharray="4 2"/>
<line x1="1381" y1="400" x2="1372" y2="470" stroke="#ffffff" stroke-width="1.5" />
<line x1="1440" y1="385" x2="1436" y2="450" stroke="#ffffff" stroke-width="1.5" />
<line x1="1480" y1="330" x2="1478" y2="392" stroke="#ffffff" stroke-width="1.5" />
<line x1="1114" y1="372" x2="1112" y2="500" stroke="#ffffff" stroke-width="1.5" />
<line x1="1283" y1="455" x2="1280" y2="480" stroke="#ffffff" stroke-width="1.5" />
<line x1="1240" y1="455" x2="1238" y2="490" stroke="#ffffff" stroke-width="1.5" />
<line x1="1188" y1="470" x2="1186" y2="500" stroke="#ffffff" stroke-width="1.5" />
<path d="M1300,462 A32,20 0 0 1 1330,478" fill="none" stroke="#fff" stroke-width="1" stroke-dasharray="4 2"/>
<path d="M1300,454.8 A44.8,28 0 0 1 1342,478" fill="none" stroke="#fff" stroke-width="1" stroke-dasharray="4 2"/>
<path d="M1300,447.6 A57.6,36 0 0 1 1354,478" fill="none" stroke="#fff" stroke-width="1" stroke-dasharray="4 2"/>
<path d="M1300,440.4 A70.4,44 0 0 1 1366,478" fill="none" stroke="#fff" stroke-width="1" stroke-dasharray="4 2"/>
<line x1="444" y1="300.6" x2="589" y2="359.4" stroke="#f5a21a" stroke-width="1.5" />
<line x1="444" y1="300.6" x2="589" y2="359.4" stroke="#4a4058" stroke-width="1.2" stroke-dasharray="2 4"/>
<line x1="436.8" y1="305.4" x2="571" y2="357" stroke="#f5a21a" stroke-width="1.5" />
<line x1="436.8" y1="305.4" x2="571" y2="357" stroke="#4a4058" stroke-width="1.2" stroke-dasharray="2 4"/>
<line x1="505" y1="339" x2="548.4" y2="355" stroke="#f5a21a" stroke-width="1.5" />
<line x1="505" y1="339" x2="548.4" y2="355" stroke="#4a4058" stroke-width="1.2" stroke-dasharray="2 4"/>
<line x1="487" y1="313" x2="518" y2="310.5" stroke="#f5a21a" stroke-width="1.5" />
<line x1="487" y1="313" x2="518" y2="310.5" stroke="#4a4058" stroke-width="1.2" stroke-dasharray="2 4"/>
<polygon points="561,244 574.5,244 574.5,270 561,270" fill="#ffa500" />
<polygon points="561,270 574.5,270 574,344 561.5,344" fill="#ffff00" />
<polygon points="561.5,344 574,344 574.5,394 559,394" fill="#00ff00" />
<polygon points="548,392 586,392 590,400 546,400" fill="#00ff00" filter="url(#d31)"/>
<polygon points="619,244 637,244 636,316 620,316" fill="#ffa500" />
<polygon points="620,316 636,316 636,394 620,394" fill="#ffff00" />
<polygon points="619,244 637,244 636,394 620,394" fill="#402020" filter="url(#d31)"/>
<polygon points="618,394 637,394 640,412 636,420 640,442 612,442 616,420 612,410" fill="#00ff00" />
<polygon points="612,394 640,394 640,442 612,442" fill="#306030" filter="url(#d25)"/>
<polygon points="547.84,177.2 551.04,163.44 556.8,157.04 563.84,146.8 576,144.24 595.2,150 608,155.12 624,162.16 704,160.88 711.04,175.6 709.12,198 705.92,220.4 700.8,236.4 700.8,249.216 696.53,236.374 692.11,246.114 689.035,234.547 684.032,249.045 680.535,239.578 676.45,244.428 672.349,237.752 669.061,246.041 663.982,237.159 659.22,245.749 656.148,238.362 651.761,248.71 648.771,238.911 644.679,245.369 639.574,238.136 634.363,247.96 629.452,236.756 624.204,244.089 621.049,235.176 617.596,243.396 613.595,237.688 609.932,247.062 606.056,236.277 601.684,246.446 596.515,237.972 591.285,244.269 585.899,237.917 582.58,244.235 577.26,239.112 572.928,245.409 569.489,238.738 565.145,248.84 562.075,238.852 556.692,250.412 552.32,220.4 552.32,204.4 548.48,196.4" fill="#ff0000" />
<clipPath id="cpRC"><polygon points="547.84,177.2 551.04,163.44 556.8,157.04 563.84,146.8 576,144.24 595.2,150 608,155.12 624,162.16 704,160.88 711.04,175.6 709.12,198 705.92,220.4 700.8,236.4 700.8,249.216 696.53,236.374 692.11,246.114 689.035,234.547 684.032,249.045 680.535,239.578 676.45,244.428 672.349,237.752 669.061,246.041 663.982,237.159 659.22,245.749 656.148,238.362 651.761,248.71 648.771,238.911 644.679,245.369 639.574,238.136 634.363,247.96 629.452,236.756 624.204,244.089 621.049,235.176 617.596,243.396 613.595,237.688 609.932,247.062 606.056,236.277 601.684,246.446 596.515,237.972 591.285,244.269 585.899,237.917 582.58,244.235 577.26,239.112 572.928,245.409 569.489,238.738 565.145,248.84 562.075,238.852 556.692,250.412 552.32,220.4 552.32,204.4 548.48,196.4"/></clipPath>
<g clip-path="url(#cpRC)">
<polygon points="524.8,140.4 713.6,140.4 713.6,252.4 524.8,252.4" fill="#6a3030" filter="url(#d19)"/>
<polygon points="550.4,146.8 630.4,156.4 617.6,207.6 553.6,198" fill="#402020" filter="url(#d19)"/>
<polygon points="524.8,140.4 713.6,140.4 713.6,252.4 524.8,252.4" fill="#ffffff" filter="url(#d3)"/>
<polygon points="524.8,230 713.6,230 713.6,252.4 524.8,252.4" fill="#ffffff" filter="url(#d9)"/>
</g>
<polygon points="704,162.8 715.2,172.4 712.96,204.4 707.84,223.6 704,220.4" fill="#ff0000" filter="url(#d40)"/>
<polygon points="521.6,169.2 532.8,162.8 555.2,155.76 552.32,207.6 531.2,199.6" fill="#ff0000" filter="url(#d40)"/>
<g filter="url(#d68)">
<line x1="508.8" y1="124.4" x2="518.4" y2="124.514" stroke="#ff0000" stroke-width="2.83966" />
<line x1="528" y1="127.6" x2="532.48" y2="129.344" stroke="#ff0000" stroke-width="2.69848" />
<line x1="548.8" y1="129.2" x2="552.64" y2="129.416" stroke="#ff0000" stroke-width="2.88108" />
<line x1="553.6" y1="134" x2="559.36" y2="132.835" stroke="#ff0000" stroke-width="2.76786" />
<line x1="540.8" y1="142" x2="545.28" y2="142.689" stroke="#ff0000" stroke-width="3.18947" />
<line x1="521.6" y1="152.56" x2="531.2" y2="149.923" stroke="#ff0000" stroke-width="2.4551" />
<line x1="494.4" y1="155.76" x2="497.6" y2="154.872" stroke="#ff0000" stroke-width="3.21447" />
<line x1="531.2" y1="155.76" x2="537.6" y2="157.07" stroke="#ff0000" stroke-width="2.06282" />
<line x1="555.2" y1="148.4" x2="561.6" y2="151.189" stroke="#ff0000" stroke-width="3.44714" />
<line x1="508.8" y1="175.6" x2="519.68" y2="177.484" stroke="#ff0000" stroke-width="2.92334" />
<line x1="496" y1="180.4" x2="501.12" y2="179.253" stroke="#ff0000" stroke-width="2.0225" />
<line x1="499.2" y1="190.96" x2="503.04" y2="191.239" stroke="#ff0000" stroke-width="2.08933" />
<line x1="510.4" y1="191.6" x2="512.96" y2="191.094" stroke="#ff0000" stroke-width="2.36291" />
<line x1="537.6" y1="166" x2="547.2" y2="162.871" stroke="#ff0000" stroke-width="2.6959" />
<line x1="545.6" y1="151.6" x2="552" y2="151.616" stroke="#ff0000" stroke-width="3.26364" />
<line x1="560" y1="166" x2="568" y2="166.522" stroke="#ff0000" stroke-width="2.96044" />
</g>
<g filter="url(#d91)">
<line x1="528" y1="220.4" x2="526.405" y2="254" stroke="#ffa500" stroke-width="3" />
<line x1="532.8" y1="210.8" x2="530.901" y2="249.2" stroke="#ffa500" stroke-width="4" />
<line x1="538.24" y1="204.4" x2="536.204" y2="242.8" stroke="#ffa500" stroke-width="5" />
<line x1="544" y1="201.2" x2="541.587" y2="257.2" stroke="#ffa500" stroke-width="6" />
<line x1="549.76" y1="201.2" x2="547.866" y2="249.2" stroke="#ffa500" stroke-width="6" />
<line x1="555.2" y1="204.4" x2="552.839" y2="242.8" stroke="#ffa500" stroke-width="5" />
<line x1="560" y1="223.6" x2="559.926" y2="255.6" stroke="#ffa500" stroke-width="4" />
<line x1="565.76" y1="230" x2="564.568" y2="257.2" stroke="#ffa500" stroke-width="4" />
<line x1="571.2" y1="233.2" x2="568.785" y2="262" stroke="#ffa500" stroke-width="4" />
<line x1="576" y1="236.4" x2="574.339" y2="249.2" stroke="#ffa500" stroke-width="3" />
<line x1="580.483" y1="236.4" x2="577.22" y2="254.454" stroke="#ffa500" stroke-width="3.49315" />
<line x1="586.38" y1="236.4" x2="586.619" y2="249.347" stroke="#ffa500" stroke-width="3.43346" />
<line x1="592.574" y1="236.4" x2="595.412" y2="257.776" stroke="#ffa500" stroke-width="3.31921" />
<line x1="601.271" y1="236.4" x2="598.47" y2="256.115" stroke="#ffa500" stroke-width="3.2534" />
<line x1="605.766" y1="236.4" x2="609.262" y2="251.546" stroke="#ffa500" stroke-width="3.43096" />
<line x1="615.944" y1="236.4" x2="616.307" y2="252.44" stroke="#ffa500" stroke-width="4.92296" />
<line x1="621.566" y1="236.4" x2="622.35" y2="251.494" stroke="#ffa500" stroke-width="4.88195" />
<line x1="629.09" y1="236.4" x2="630.869" y2="259.21" stroke="#ffa500" stroke-width="3.59758" />
<line x1="635.076" y1="236.4" x2="633.81" y2="250.832" stroke="#ffa500" stroke-width="3.13028" />
<line x1="641.924" y1="236.4" x2="643.088" y2="249.238" stroke="#ffa500" stroke-width="4.35587" />
<line x1="649.081" y1="236.4" x2="648.627" y2="258.367" stroke="#ffa500" stroke-width="3.96149" />
<line x1="656.051" y1="236.4" x2="656.544" y2="257.092" stroke="#ffa500" stroke-width="3.114" />
</g>
<g filter="url(#d68)">
<line x1="491.2" y1="190" x2="489.184" y2="195.76" stroke="#ffa500" stroke-width="3" />
<line x1="500.8" y1="206" x2="498.336" y2="213.04" stroke="#ffa500" stroke-width="3" />
<line x1="505.6" y1="196.4" x2="503.808" y2="201.52" stroke="#ffa500" stroke-width="3" />
<line x1="513.6" y1="209.2" x2="511.584" y2="214.96" stroke="#ffa500" stroke-width="3" />
<line x1="510.4" y1="230" x2="507.936" y2="237.04" stroke="#ffa500" stroke-width="3" />
<line x1="518.4" y1="226.8" x2="516.16" y2="233.2" stroke="#ffa500" stroke-width="3" />
<line x1="523.2" y1="215.6" x2="521.632" y2="220.08" stroke="#ffa500" stroke-width="3" />
<line x1="528" y1="210.8" x2="526.88" y2="214" stroke="#ffa500" stroke-width="3" />
<line x1="512" y1="234.8" x2="510.88" y2="238" stroke="#ffa500" stroke-width="3" />
</g>
<polygon points="636.427,146.004 629.105,138.509 618.63,142.045 610.612,136.983 601.474,135.842 592.254,134.986 582.928,134.502 575.617,126.964 565.224,130.214 560.115,137.176 559.569,150.007 569.185,149.478 577.009,155.218 585.962,157.008 595.136,158.023 603.772,160.922 611.934,165.482 620.639,168.139 628.522,173.673" fill="#a020f0" filter="url(#d91)"/>
<polygon points="634.885,151.402 626.897,146.235 617.191,147.082 608.815,143.272 599.837,141.57 590.82,140.007 581.752,138.618 573.715,133.622 564.112,134.107 560.115,137.176 561.285,144.004 570.446,145.062 578.7,149.3 587.532,151.513 596.486,153.3 605.158,156.073 613.574,159.743 622.281,162.392 630.537,166.62" fill="#a020f0" />
<polygon points="641.1,154.529 637.83,146.609 633.845,138.995 632.067,130.436 628.23,122.758 623.945,115.274 619.598,107.815 615.306,100.333 613.232,91.9008 604.818,92.2426 597.084,98.8213 603.371,105.448 606.1,113.6 607.195,122.452 610.797,130.23 612.988,138.612 615.166,147 619.348,154.53 621.477,162.939" fill="#a020f0" filter="url(#d91)"/>
<polygon points="637.455,156.091 634.102,148.206 630.358,140.489 627.799,132.265 624.127,124.517 620.22,116.87 616.288,109.234 612.393,101.582 609.616,93.4504 604.818,92.2426 601.542,96.9106 606.32,104.184 609.314,112.222 611.448,120.629 614.887,128.477 617.578,136.645 620.255,144.819 624.017,152.528 626.662,160.716" fill="#a020f0" />
<polygon points="642.766,157.856 641.49,149.373 639.615,140.899 640.652,132.382 640.417,123.884 637.747,115.421 640.239,106.883 638.355,98.4084 639.168,89.8946 631.956,87.0003 627.124,90.0717 625.427,98.5985 624.855,107.109 626.128,115.592 622.543,124.146 626.576,132.589 626.281,141.095 623.329,149.64 621.834,158.164" fill="#a020f0" filter="url(#d91)"/>
<polygon points="638.371,157.921 637.579,149.431 636.468,140.945 636.934,132.437 636.706,123.938 635.195,115.459 636.387,106.939 635.3,98.4533 635.584,89.9473 631.956,87.0003 629.562,90.0359 628.712,98.5502 628.42,107.056 629.095,115.548 627.21,124.078 629.378,132.548 629.246,141.052 627.662,149.577 626.859,158.09" fill="#a020f0" />
<polygon points="640.234,159.915 644.485,151.945 644.643,142.891 649.761,135.15 648.804,125.801 651.034,117.296 651.734,108.386 654.93,100.136 657.204,91.6422 651.768,87.0999 644.301,88.2268 642.967,96.9691 640.906,105.519 639.16,114.153 634.511,122.018 630.859,130.146 630.061,139.031 625.061,146.803 623.958,155.606" fill="#a020f0" filter="url(#d91)"/>
<polygon points="636.979,159.053 640.293,150.835 641.369,142.024 645.123,133.922 645.614,124.957 647.812,116.443 649.211,107.718 651.899,99.3336 654.102,90.8211 651.768,87.0999 647.651,89.1134 645.803,97.7199 643.603,106.233 641.578,114.793 638.021,122.947 634.978,131.237 633.471,139.933 629.686,148.027 628.027,156.684" fill="#a020f0" />
<polygon points="641.365,164.54 647.707,158.421 651.252,150.115 656.546,143.177 661.282,135.802 664.408,127.169 669.556,120.116 675.842,113.954 680.331,106.386 677.848,100.637 672.678,100.403 666.1,106.338 658.766,111.68 655.463,120.175 647.344,124.905 643.964,133.34 635.64,137.909 631.077,145.42 623.91,150.893" fill="#a020f0" filter="url(#d91)"/>
<polygon points="637.601,161.597 643.471,155.109 647.814,147.427 653.108,140.489 658.103,133.317 662.255,125.486 667.48,118.493 673.284,111.954 678.166,104.693 677.848,100.637 674.339,101.701 668.319,108.072 661.892,114.125 657.559,121.814 650.698,127.528 646.355,135.209 639.357,140.816 634.39,148.01 628,154.091" fill="#a020f0" />
<polygon points="636.146,162.027 644.089,155.703 652.942,150.545 660.313,143.491 667.206,135.824 675.982,130.567 684.006,124.347 691.724,117.737 699.182,110.793 699.364,106.153 695.44,106.003 686.648,111.24 678.129,116.825 670.697,123.803 661.893,129.024 654.177,135.636 646.473,142.266 638.39,148.41 628.695,152.49" fill="#a020f0" filter="url(#d91)"/>
<polygon points="634.73,160.215 642.687,153.909 651.136,148.234 658.779,141.528 666.173,134.501 674.567,128.755 682.557,122.493 690.389,116.028 698.091,109.396 699.364,106.153 696.22,107.002 687.801,112.715 679.512,118.596 671.79,125.202 663.349,130.886 655.484,137.309 647.631,143.747 639.575,149.926 630.632,154.97" fill="#a020f0" />
<polygon points="635.965,164.2 644.302,159.472 653.724,157.013 661.507,151.129 670.883,148.573 678.175,141.662 686.936,137.82 695.538,133.648 703.6,128.346 704.706,123.706 699.852,120.509 691.336,124.861 682.242,128.006 673.183,131.225 664.805,135.864 655.216,137.974 646.89,142.726 638.463,147.263 628.66,148.924" fill="#a020f0" filter="url(#d91)"/>
<polygon points="634.631,161.41 643.088,156.935 652.136,153.693 660.292,148.589 669.304,145.272 677.206,139.636 685.886,135.626 694.481,131.437 702.8,126.673 704.706,123.706 700.926,122.755 692.333,126.946 683.446,130.523 674.574,134.132 666.062,138.494 656.905,141.505 648.426,145.937 639.896,150.26 630.613,153.008" fill="#a020f0" />
<polygon points="634.346,166.076 643.139,163.335 652.257,162.542 660.899,158.893 669.952,157.715 678.644,154.361 687.8,153.799 696.486,150.418 705.43,148.577 707.959,145.507 704.532,143.195 695.33,143.481 686.385,145.313 677.25,146.002 668.062,146.37 658.953,147.218 649.833,148.001 640.831,149.488 631.8,150.798" fill="#a020f0" filter="url(#d91)"/>
<polygon points="633.74,162.442 642.623,160.237 651.682,159.094 660.484,156.404 669.508,155.048 678.339,152.536 687.416,151.496 696.249,148.992 705.215,147.289 707.959,145.507 704.766,144.597 695.658,145.446 686.68,147.083 677.605,148.128 668.5,148.997 659.436,150.117 650.367,151.2 641.361,152.667 632.34,154.039" fill="#a020f0" />
<polygon points="637.727,153.166 631.013,148.78 626.392,142.253 620.984,136.531 614.603,131.804 608.767,126.519 602.927,121.24 596.287,116.778 590.971,110.961 585.855,111.903 584.635,117.441 590.597,122.597 596.851,127.453 601.711,133.736 606.799,139.785 612.317,145.394 618.327,150.501 622.857,157.121 627.894,163.222" fill="#a020f0" filter="url(#d91)"/>
<polygon points="635.6,155.341 629.362,150.468 624.266,144.427 618.735,138.83 612.682,133.768 606.921,128.408 601.156,123.051 594.982,118.112 589.486,112.481 585.855,111.903 586.318,115.721 592.081,121.079 598.007,126.272 603.212,132.201 608.532,138.013 614.079,143.592 619.895,148.898 624.907,155.024 630.192,160.872" fill="#a020f0" />
<polygon points="642.559,155.929 636.713,149.343 635.311,141.795 633.267,134.386 633.918,126.393 630.203,119.346 630.244,111.485 627.28,104.275 624.493,97.0265 619.365,95.068 615.204,99.0392 615.196,106.893 618.868,113.95 617.577,122.081 620.178,129.37 622.812,136.651 622.994,144.464 625.958,151.674 623.249,160.113" fill="#a020f0" filter="url(#d91)"/>
<polygon points="638.258,156.861 634.289,149.869 632.761,142.348 630.883,134.902 630.437,127.147 627.67,119.894 626.869,112.216 624.505,104.876 622.247,97.5132 619.365,95.068 617.602,98.5196 618.351,106.209 620.983,113.491 621.047,121.329 623.145,128.727 625.275,136.117 626.092,143.792 628.418,151.141 627.637,159.162" fill="#a020f0" />
<polygon points="638.025,160.513 643.828,153.727 644.718,144.484 650.208,137.541 653.748,129.624 656.314,121.219 661.482,114.116 663.848,105.612 667.932,97.9661 665.342,93.3167 660.67,94.3349 657.181,102.278 651.686,109.218 647.241,116.683 643.545,124.522 639.013,131.944 635.34,139.795 630.787,147.206 625.379,154.189" fill="#a020f0" filter="url(#d91)"/>
<polygon points="635.764,159.382 640.673,152.149 642.9,143.575 647.624,136.25 651.291,128.395 654.445,120.285 658.962,112.856 662.024,104.699 665.966,96.9831 665.342,93.3167 662.335,95.1675 658.624,102.999 653.884,110.317 649.676,117.901 645.865,125.682 641.61,133.243 637.818,141.034 633.549,148.587 628.808,155.904" fill="#a020f0" />
<polygon points="636.003,162.076 642.949,156.583 650.716,152.204 657.895,147.028 663.394,139.57 670.692,134.556 678.419,130.122 684.527,123.492 691.551,118.105 692.415,114.22 688.443,113.887 680.872,118.532 673.848,123.919 665.82,127.943 659.499,134.284 652.351,139.503 644.357,143.574 637.327,148.953 628.68,152.138" fill="#a020f0" filter="url(#d91)"/>
<polygon points="634.652,160.242 641.669,154.845 649.132,150.054 656.271,144.823 662.51,138.371 669.715,133.229 677.138,128.383 683.72,122.396 690.775,117.052 692.415,114.22 689.221,114.943 681.851,119.861 674.761,125.158 667.146,129.743 660.433,135.552 653.285,140.771 645.68,145.369 638.596,150.674 630.624,154.776" fill="#a020f0" />
<ellipse cx="636" cy="144" rx="46" ry="18" fill="#a020f0"/>
<polygon points="560,150 600,146 640,160 700,160 704,152 690,150 640,150 600,140 562,142" fill="#a020f0" />
<polygon points="629.421,144.317 622.436,138.255 613.221,141.118 605.747,137.013 597.477,136.092 589.148,135.408 580.742,135.033 573.783,128.867 564.607,131.573 560.09,137.272 560.522,147.912 569.154,147.385 576.496,152.016 584.649,153.405 592.958,154.168 600.882,156.471 608.47,160.12 616.444,162.224 623.837,166.651" fill="#3a2048" filter="url(#d31)"/>
<polygon points="638.4,155.686 635.065,147.793 631.256,140.105 628.894,131.796 625.175,124.068 621.167,116.464 617.125,108.875 613.125,101.268 610.52,93.063 604.818,92.2426 600.427,97.3883 605.578,104.502 608.502,112.571 610.367,121.093 613.843,128.924 616.401,137.149 618.945,145.381 622.811,153.045 625.318,161.292" fill="#3a2048" filter="url(#d25)"/>
<polygon points="638.86,157.914 637.976,149.425 636.754,140.941 637.229,132.432 636.953,123.935 635.33,115.457 636.53,106.937 635.36,98.4524 635.584,89.9473 631.956,87.0003 629.562,90.0359 628.647,98.5511 628.288,107.058 628.939,115.551 626.899,124.082 629.155,132.551 628.976,141.055 627.223,149.583 626.301,158.099" fill="#3a2048" filter="url(#d14)"/>
<ellipse cx="620" cy="146" rx="30" ry="12" fill="#3a2048" filter="url(#d19)"/>
<circle cx="592" cy="98" r="3.5" fill="#a020f0" filter="url(#d81)"/>
<circle cx="588" cy="102" r="2.5" fill="#a020f0" filter="url(#d81)"/>
<circle cx="573" cy="104" r="1.5" fill="#a020f0" filter="url(#d81)"/>
<circle cx="570" cy="112" r="1.5" fill="#a020f0" filter="url(#d81)"/>
<circle cx="568" cy="118" r="1.5" fill="#a020f0" filter="url(#d81)"/>
<circle cx="585" cy="120" r="2.5" fill="#a020f0" filter="url(#d81)"/>
<circle cx="600" cy="96" r="2" fill="#a020f0" filter="url(#d81)"/>
<circle cx="646" cy="88" r="1.5" fill="#a020f0" filter="url(#d81)"/>
<circle cx="700" cy="112" r="1.5" fill="#a020f0" filter="url(#d81)"/>
<circle cx="708" cy="128" r="1.2" fill="#a020f0" filter="url(#d81)"/>
<circle cx="712" cy="112" r="1.2" fill="#a020f0" filter="url(#d81)"/>
<line x1="609" y1="119" x2="615" y2="116" stroke="#ff0000" stroke-width="2" />
<line x1="612" y1="124" x2="618" y2="121" stroke="#ff0000" stroke-width="2" />
<line x1="606" y1="117" x2="612" y2="114" stroke="#ff0000" stroke-width="2" />
<line x1="558.4" y1="145.84" x2="563.067" y2="144.84" stroke="#a020f0" stroke-width="3" />
<polygon points="371.762,136.464 380.38,136.464 379.873,204.905 372.776,204.905" fill="#ffa500" />
<polygon points="373.79,106.046 377.338,106.046 380.38,136.464 371.762,136.464" fill="#ffa500" filter="url(#d81)"/>
<polygon points="373.283,204.905 379.366,204.905 377.338,268.276 376.324,268.276" fill="#ffff00" />
<g filter="url(#d68)">
<line x1="292.674" y1="103.511" x2="291.252" y2="111.115" stroke="#ffa500" stroke-width="2.58555" />
<line x1="294.021" y1="105.805" x2="293.458" y2="113.965" stroke="#ffa500" stroke-width="1.5" />
<line x1="309.151" y1="118.72" x2="308.075" y2="131.394" stroke="#ffa500" stroke-width="3.4474" />
<line x1="311.336" y1="120.082" x2="310.851" y2="128.443" stroke="#ffa500" stroke-width="1.5" />
<line x1="312.953" y1="131.394" x2="310.068" y2="149.138" stroke="#ffa500" stroke-width="6.03295" />
<line x1="312.038" y1="133.311" x2="310.246" y2="147.248" stroke="#ffa500" stroke-width="1.5" />
<line x1="318.023" y1="136.464" x2="315.79" y2="151.673" stroke="#ffa500" stroke-width="5.1711" />
<line x1="316.126" y1="134.251" x2="317.118" y2="147.638" stroke="#ffa500" stroke-width="1.5" />
<line x1="319.29" y1="106.046" x2="314.994" y2="146.603" stroke="#ffa500" stroke-width="3.4474" />
<line x1="320.113" y1="103.77" x2="319.1" y2="114.745" stroke="#ffa500" stroke-width="1.5" />
<line x1="321.825" y1="141.534" x2="318.807" y2="161.812" stroke="#ffa500" stroke-width="3.4474" />
<line x1="325.033" y1="141.801" x2="323.497" y2="155.976" stroke="#ffa500" stroke-width="1.5" />
<line x1="326.895" y1="98.4411" x2="323.587" y2="121.255" stroke="#ffa500" stroke-width="2.58555" />
<line x1="329.932" y1="99.352" x2="329.588" y2="108.781" stroke="#ffa500" stroke-width="1.5" />
<line x1="334.499" y1="149.138" x2="331.738" y2="171.952" stroke="#ffa500" stroke-width="4.30925" />
<line x1="332.277" y1="146.886" x2="332.875" y2="155.234" stroke="#ffa500" stroke-width="1.5" />
<line x1="339.569" y1="164.347" x2="337.258" y2="187.161" stroke="#ffa500" stroke-width="6.03295" />
<line x1="337.501" y1="169.179" x2="338.182" y2="182.727" stroke="#ffa500" stroke-width="1.5" />
<line x1="343.371" y1="141.534" x2="338.904" y2="182.091" stroke="#ffa500" stroke-width="4.30925" />
<line x1="343.945" y1="144.548" x2="342.312" y2="155.311" stroke="#ffa500" stroke-width="1.5" />
<line x1="347.174" y1="136.464" x2="344.629" y2="161.812" stroke="#ffa500" stroke-width="3.4474" />
<line x1="345.052" y1="140.949" x2="345.715" y2="151.045" stroke="#ffa500" stroke-width="1.5" />
<line x1="352.243" y1="141.534" x2="347.78" y2="177.022" stroke="#ffa500" stroke-width="5.1711" />
<line x1="351.898" y1="141.932" x2="352.882" y2="151.798" stroke="#ffa500" stroke-width="1.5" />
<line x1="356.046" y1="111.115" x2="350.459" y2="151.673" stroke="#ffa500" stroke-width="3.4474" />
<line x1="353.159" y1="114.041" x2="354.137" y2="125.001" stroke="#ffa500" stroke-width="1.5" />
<line x1="362.383" y1="116.185" x2="359.024" y2="144.068" stroke="#ffa500" stroke-width="3.4474" />
<line x1="362.741" y1="119.34" x2="361.407" y2="131.429" stroke="#ffa500" stroke-width="1.5" />
<line x1="367.452" y1="136.464" x2="365.105" y2="156.743" stroke="#ffa500" stroke-width="3.4474" />
<line x1="368.323" y1="135.303" x2="366.833" y2="144.785" stroke="#ffa500" stroke-width="1.5" />
<line x1="380.127" y1="151.673" x2="378.343" y2="171.952" stroke="#ffa500" stroke-width="2.58555" />
<line x1="379.038" y1="153.68" x2="377.958" y2="160.713" stroke="#ffa500" stroke-width="1.5" />
<line x1="387.731" y1="141.534" x2="382.204" y2="182.091" stroke="#ffa500" stroke-width="4.30925" />
<line x1="389.958" y1="144.908" x2="389.082" y2="157.741" stroke="#ffa500" stroke-width="1.5" />
<line x1="391.534" y1="156.743" x2="387.543" y2="192.231" stroke="#ffa500" stroke-width="4.30925" />
<line x1="394.363" y1="161.495" x2="393.584" y2="177.386" stroke="#ffa500" stroke-width="1.5" />
<line x1="397.871" y1="151.673" x2="396.139" y2="171.952" stroke="#ffa500" stroke-width="2.58555" />
<line x1="398.513" y1="155.854" x2="397.986" y2="165.61" stroke="#ffa500" stroke-width="1.5" />
<line x1="404.208" y1="151.673" x2="400.173" y2="182.091" stroke="#ffa500" stroke-width="3.4474" />
<line x1="406.878" y1="150.372" x2="405.086" y2="164.425" stroke="#ffa500" stroke-width="1.5" />
<line x1="411.812" y1="151.673" x2="408.579" y2="182.091" stroke="#ffa500" stroke-width="3.4474" />
<line x1="411.693" y1="155.503" x2="409.85" y2="164.083" stroke="#ffa500" stroke-width="1.5" />
<line x1="416.882" y1="141.534" x2="411.391" y2="184.626" stroke="#ffa500" stroke-width="4.30925" />
<line x1="416.311" y1="140.296" x2="414.519" y2="149.677" stroke="#ffa500" stroke-width="1.5" />
<line x1="427.022" y1="149.138" x2="424.283" y2="177.022" stroke="#ffa500" stroke-width="3.4474" />
<line x1="430.453" y1="152.275" x2="429.89" y2="160.797" stroke="#ffa500" stroke-width="1.5" />
<line x1="438.428" y1="151.673" x2="435.78" y2="179.556" stroke="#ffa500" stroke-width="2.58555" />
<line x1="438.61" y1="154.679" x2="436.695" y2="162.8" stroke="#ffa500" stroke-width="1.5" />
<line x1="446.033" y1="171.952" x2="445.027" y2="184.626" stroke="#ffa500" stroke-width="2.58555" />
<line x1="448.128" y1="176.12" x2="447.932" y2="186.381" stroke="#ffa500" stroke-width="1.5" />
<line x1="432.091" y1="131.394" x2="430.998" y2="141.534" stroke="#ffa500" stroke-width="2.58555" />
<line x1="434.571" y1="131.201" x2="434.174" y2="139.961" stroke="#ffa500" stroke-width="1.5" />
<line x1="369.987" y1="113.65" x2="367.658" y2="136.464" stroke="#ffa500" stroke-width="4.30925" />
<line x1="366.511" y1="116.327" x2="367.373" y2="122.562" stroke="#ffa500" stroke-width="1.5" />
<line x1="330.697" y1="131.394" x2="328.71" y2="149.138" stroke="#ffa500" stroke-width="3.4474" />
<line x1="331.718" y1="135.336" x2="331.471" y2="143.908" stroke="#ffa500" stroke-width="1.5" />
<line x1="310.418" y1="113.65" x2="309.362" y2="121.255" stroke="#ffa500" stroke-width="2.15463" />
<line x1="313.674" y1="118.002" x2="312.075" y2="124.95" stroke="#ffa500" stroke-width="1.5" />
<line x1="338.302" y1="126.324" x2="335.859" y2="141.534" stroke="#ffa500" stroke-width="2.58555" />
<line x1="334.933" y1="127.188" x2="333.355" y2="141.861" stroke="#ffa500" stroke-width="1.5" />
<line x1="349.708" y1="113.65" x2="347.815" y2="131.394" stroke="#ffa500" stroke-width="2.15463" />
<line x1="347.058" y1="115.212" x2="346.031" y2="126.15" stroke="#ffa500" stroke-width="1.5" />
<line x1="381.394" y1="116.185" x2="378.534" y2="136.464" stroke="#ffa500" stroke-width="2.58555" />
<line x1="379.024" y1="115.049" x2="378.158" y2="128.149" stroke="#ffa500" stroke-width="1.5" />
<line x1="395.336" y1="136.464" x2="393.891" y2="149.138" stroke="#ffa500" stroke-width="2.15463" />
<line x1="392.115" y1="139.335" x2="392.736" y2="153.077" stroke="#ffa500" stroke-width="1.5" />
<line x1="386.464" y1="103.511" x2="406.743" y2="118.72" stroke="#ff0000" stroke-width="10.545" />
<line x1="411.812" y1="106.046" x2="421.952" y2="131.394" stroke="#ff0000" stroke-width="4.05577" />
<line x1="421.952" y1="106.046" x2="437.161" y2="131.394" stroke="#ff0000" stroke-width="4.05577" />
<line x1="432.091" y1="103.511" x2="452.37" y2="131.394" stroke="#ff0000" stroke-width="4.86692" />
<line x1="442.231" y1="111.115" x2="462.51" y2="136.464" stroke="#ff0000" stroke-width="4.05577" />
<line x1="454.905" y1="113.65" x2="467.579" y2="126.324" stroke="#ff0000" stroke-width="3.24461" />
<line x1="468.847" y1="104.778" x2="477.719" y2="116.185" stroke="#ff0000" stroke-width="2.43346" />
<line x1="454.905" y1="136.464" x2="462.51" y2="166.882" stroke="#ff0000" stroke-width="4.86692" />
<line x1="444.766" y1="156.743" x2="448.568" y2="177.022" stroke="#ff0000" stroke-width="3.24461" />
<line x1="432.091" y1="141.534" x2="434.626" y2="171.952" stroke="#ff0000" stroke-width="2.43346" />
<line x1="424.487" y1="149.138" x2="429.556" y2="161.812" stroke="#ff0000" stroke-width="4.05577" />
<line x1="416.882" y1="116.185" x2="420.684" y2="131.394" stroke="#ff0000" stroke-width="4.05577" />
<line x1="330.697" y1="128.859" x2="343.371" y2="118.72" stroke="#ff0000" stroke-width="4.86692" />
<line x1="319.29" y1="113.65" x2="321.825" y2="126.324" stroke="#ff0000" stroke-width="2.43346" />
<line x1="326.895" y1="95.9062" x2="329.43" y2="106.046" stroke="#ff0000" stroke-width="2.02788" />
<line x1="312.953" y1="106.046" x2="315.488" y2="111.115" stroke="#ff0000" stroke-width="2.02788" />
<line x1="340.837" y1="106.046" x2="348.441" y2="118.72" stroke="#ff0000" stroke-width="2.43346" />
<line x1="333.232" y1="90.8365" x2="336.274" y2="92.1039" stroke="#ff0000" stroke-width="2.02788" />
<line x1="356.046" y1="126.324" x2="358.58" y2="136.464" stroke="#ff0000" stroke-width="2.02788" />
<line x1="391.534" y1="106.046" x2="401.673" y2="121.255" stroke="#ff0000" stroke-width="8.11153" />
<line x1="406.743" y1="103.511" x2="416.882" y2="113.65" stroke="#ff0000" stroke-width="3.24461" />
<line x1="437.161" y1="131.394" x2="447.3" y2="141.534" stroke="#ff0000" stroke-width="3.24461" />
<line x1="368.72" y1="88.3016" x2="372.522" y2="95.9062" stroke="#ff0000" stroke-width="2.02788" />
<line x1="368.72" y1="57.8834" x2="377.592" y2="70.5577" stroke="#ff0000" stroke-width="2.02788" />
<line x1="389.076" y1="70.276" x2="392.368" y2="69.1525" stroke="#a020f0" stroke-width="2.2" />
<line x1="397.235" y1="76.9979" x2="400.326" y2="76.566" stroke="#a020f0" stroke-width="2.2" />
<line x1="383.986" y1="99.9887" x2="385.871" y2="100.504" stroke="#a020f0" stroke-width="2.2" />
<line x1="391.892" y1="101.673" x2="393.188" y2="102.679" stroke="#a020f0" stroke-width="2.2" />
<line x1="390.537" y1="94.0913" x2="394.438" y2="93.6421" stroke="#a020f0" stroke-width="2.2" />
<line x1="396.839" y1="86.6819" x2="399.521" y2="85.0005" stroke="#a020f0" stroke-width="2.2" />
<line x1="385.495" y1="79.3115" x2="389.475" y2="77.8495" stroke="#a020f0" stroke-width="2.2" />
<line x1="400.624" y1="94.9906" x2="402.968" y2="96.0975" stroke="#a020f0" stroke-width="2.2" />
<line x1="388.376" y1="86.3852" x2="390.544" y2="86.3928" stroke="#a020f0" stroke-width="2.2" />
<line x1="388.088" y1="76.7904" x2="391.201" y2="78.8768" stroke="#a020f0" stroke-width="2.2" />
<line x1="397.64" y1="84.205" x2="399.349" y2="84.1321" stroke="#a020f0" stroke-width="2.2" />
<line x1="389.831" y1="90.4449" x2="393.72" y2="88.872" stroke="#a020f0" stroke-width="2.2" />
<line x1="389.597" y1="85.4788" x2="392.749" y2="87.9312" stroke="#a020f0" stroke-width="2.2" />
<line x1="399.477" y1="90.2669" x2="402.753" y2="91.6071" stroke="#a020f0" stroke-width="2.2" />
<line x1="402.093" y1="92.8298" x2="405.142" y2="92.0564" stroke="#a020f0" stroke-width="2.2" />
<line x1="394.046" y1="97.2945" x2="397.937" y2="100.241" stroke="#a020f0" stroke-width="2.2" />
<line x1="384.062" y1="81.9065" x2="385.498" y2="82.6727" stroke="#a020f0" stroke-width="2.2" />
<line x1="389.025" y1="71.8633" x2="392.893" y2="73.383" stroke="#a020f0" stroke-width="2.2" />
<line x1="380.572" y1="79.9217" x2="383.497" y2="81.3299" stroke="#a020f0" stroke-width="2.2" />
<line x1="384.404" y1="77.0452" x2="387.94" y2="75.8123" stroke="#a020f0" stroke-width="2.2" />
<line x1="393.495" y1="77.8676" x2="395.632" y2="80.5712" stroke="#a020f0" stroke-width="2.2" />
<line x1="389.178" y1="83.5268" x2="392.029" y2="82.93" stroke="#a020f0" stroke-width="2.2" />
<line x1="379.535" y1="81.6727" x2="381.352" y2="80.615" stroke="#a020f0" stroke-width="2.2" />
<line x1="390.306" y1="69.4164" x2="393.129" y2="70.9184" stroke="#a020f0" stroke-width="2.2" />
<line x1="391.729" y1="71.3771" x2="393.656" y2="71.6476" stroke="#a020f0" stroke-width="2.2" />
<line x1="400.888" y1="86.8107" x2="402.036" y2="85.7486" stroke="#a020f0" stroke-width="2.2" />
<line x1="387.069" y1="87.6086" x2="388.744" y2="89.6204" stroke="#a020f0" stroke-width="2.2" />
<line x1="352.243" y1="52.8137" x2="355.243" y2="53.8137" stroke="#a020f0" stroke-width="2.2" />
<line x1="354.018" y1="56.616" x2="357.018" y2="57.616" stroke="#a020f0" stroke-width="2.2" />
<line x1="363.65" y1="47.237" x2="366.65" y2="48.237" stroke="#a020f0" stroke-width="2.2" />
<line x1="369.987" y1="46.4766" x2="372.987" y2="47.4766" stroke="#a020f0" stroke-width="2.2" />
<line x1="383.929" y1="55.3485" x2="386.929" y2="56.3485" stroke="#a020f0" stroke-width="2.2" />
<line x1="406.743" y1="70.5577" x2="409.743" y2="71.5577" stroke="#a020f0" stroke-width="2.2" />
<line x1="397.871" y1="74.3599" x2="400.871" y2="75.3599" stroke="#a020f0" stroke-width="2.2" />
<line x1="433.359" y1="87.0342" x2="436.359" y2="88.0342" stroke="#a020f0" stroke-width="2.2" />
<line x1="439.696" y1="90.8365" x2="442.696" y2="91.8365" stroke="#a020f0" stroke-width="2.2" />
<line x1="444.766" y1="95.3992" x2="447.766" y2="96.3992" stroke="#a020f0" stroke-width="2.2" />
<line x1="442.231" y1="89.5691" x2="445.231" y2="90.5691" stroke="#a020f0" stroke-width="2.2" />
<line x1="458.2" y1="83.7389" x2="461.2" y2="84.7389" stroke="#a020f0" stroke-width="2.2" />
<line x1="475.691" y1="94.6388" x2="478.691" y2="95.6388" stroke="#a020f0" stroke-width="2.2" />
<line x1="411.812" y1="78.1622" x2="414.812" y2="79.1622" stroke="#a020f0" stroke-width="2.2" />
<line x1="411.812" y1="103.511" x2="414.812" y2="104.511" stroke="#a020f0" stroke-width="2.2" />
<line x1="291.407" y1="106.046" x2="293.407" y2="111.046" stroke="#ffa500" stroke-width="2" />
<line x1="295.209" y1="126.324" x2="297.209" y2="131.324" stroke="#ffa500" stroke-width="2" />
<line x1="305.349" y1="122.522" x2="307.349" y2="127.522" stroke="#ffa500" stroke-width="2" />
</g>
<polygon points="361.5,288 365.5,288 366,302 363,297" fill="#00ff00" filter="url(#d68)"/>
<polygon points="350,302 358,302 364,309 364,313 349,313 350,306" fill="#00ff00" filter="url(#d60)"/>
<polygon points="342,306 350,306 350,313 346,313" fill="#00ff00" filter="url(#d31)"/>
<line x1="354" y1="291.3" x2="358" y2="294.7" stroke="#00ff00" stroke-width="1" />
</svg>
<div id="clip"><div id="dlg">
<div id="ttl">Configure Elevation Colours</div>
<div id="cls"><svg width="16" height="14" viewBox="0 0 16 14"><path d="M2.5,2 L5.5,2 L8,5 L10.5,2 L13.5,2 L9.8,7 L13.5,12 L10.5,12 L8,9 L5.5,12 L2.5,12 L6.2,7 Z" fill="#fdfdfd" stroke="#7c7c84" stroke-width="1.4" stroke-linejoin="round"/></svg></div>
<div id="cli">
<div class="band" style="top:23.7px;background:#ffffff"></div>
<div class="band" style="top:67.7px;background:#808080"></div>
<div class="band" style="top:111.7px;background:#ee82ee"></div>
<div class="band" style="top:155.7px;background:#a020f0"></div>
<div class="band" style="top:199.7px;background:#ff0000"></div>
<div class="band" style="top:243.7px;background:#ffa500"></div>
<div class="band" style="top:287.7px;background:#ffff00"></div>
<div class="band" style="top:331.7px;background:#00ff00"></div>
<div class="lv" style="top:17.7px">13.557</div>
<div class="lv" style="top:61.7px">12.825</div>
<div class="lv" style="top:105.7px">12.094</div>
<div class="lv" style="top:149.7px">11.362</div>
<div class="lv" style="top:193.7px">10.630</div>
<div class="lv" style="top:237.7px">9.898</div>
<div class="lv" style="top:281.7px">9.167</div>
<div class="lv" style="top:325.7px">8.435</div>
<div class="lv" style="top:369.7px">7.703</div>
<div class="lb" style="left:128px;top:21.7px">Number of Bands:</div>
<div class="in" style="top:17.7px;background:#fff"><span style="position:absolute;right:4px;top:3px;width:7px;height:13px;background:#3399ff;color:#fff;font-size:11px;line-height:13px;text-align:center;border-right:1px solid #444">8</span></div>
<div class="lb" style="left:128px;top:55.7px">Interval:</div>
<div class="in" style="top:52.7px;background:#f0f0f0;border-color:#dcdfe4;border-top-color:#c4c6ca"></div>
<div class="lb" style="left:128px;top:89.7px">Start:</div>
<div class="in" style="top:87.7px;background:#f0f0f0;border-color:#dcdfe4;border-top-color:#c4c6ca"></div>
<div style="position:absolute;left:334px;top:123.7px;width:11px;height:11px;border:1px solid #8e8f8f;background:linear-gradient(135deg,#d8dce0,#f6f6f6)"><svg width="11" height="11" viewBox="0 0 11 11" style="position:absolute;left:0;top:0"><path d="M2.2,5.2 L4.4,8.6 L8.8,1.6" fill="none" stroke="#4b5fa8" stroke-width="1.8"/></svg></div>
<div class="lb" style="left:349.5px;top:124.7px;width:40px;text-align:left">Auto</div>
<div class="lb" style="left:182px;top:148.7px">Max. Elevation: 13.557</div>
<div class="lb" style="left:182px;top:172.7px">Min. Elevation: 7.703</div>
<div class="btn" style="left:296px;top:197.7px;text-indent:-3px">Reset</div>
<div class="btn" style="left:295.5px;top:247.7px;border-color:#6a9fbf;box-shadow:0 0 0 1px #a6e0f2 inset;background:linear-gradient(#f1f5f8 0%,#e6ecf0 48%,#d6dee4 52%,#ccd6dd 100%)">OK</div>
<div class="btn" style="left:295.5px;top:297.7px">Cancel</div>
<div class="btn" style="left:295px;top:348.7px">Help</div>
</div></div></div>
</body></html>
